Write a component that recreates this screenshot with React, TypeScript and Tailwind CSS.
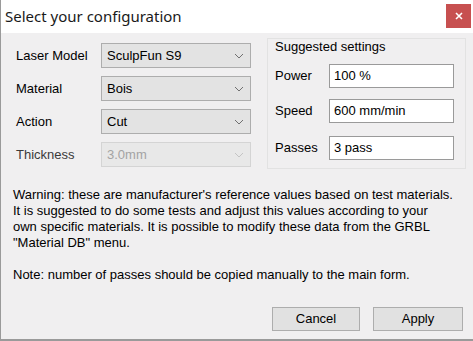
import React from "react";

const Chevron = ({ color = "#606060" }: { color?: string }) => (
  <svg width="10" height="6" viewBox="0 0 10 6" fill="none">
    <path d="M1 1l4 4 4-4" stroke={color} strokeWidth="1" />
  </svg>
);

const Combo = ({ value, disabled = false }: { value: string; disabled?: boolean }) => (
  <div
    className={`flex h-[25px] w-[150px] items-center justify-between border pl-[5px] pr-[6px] ${
      disabled ? "border-[#d4d4d4] bg-[#e8e8e8] text-[#a3a3a3]" : "border-[#adadad] bg-[#e3e3e3] text-black"
    }`}
  >
    <span>{value}</span>
    <Chevron color={disabled ? "#c4c4c4" : "#707070"} />
  </div>
);

const Field = ({ value }: { value: string }) => (
  <div className="flex h-[24px] w-[125px] items-center border border-[#9a9a9a] bg-white pl-[4px]">{value}</div>
);

export default function App() {
  return (
    <div
      className="relative flex h-[341px] w-[473px] flex-col overflow-hidden border-l border-[#9a9a9a] bg-[#f0eff0] text-[13px] text-black"
      style={{ fontFamily: '"Liberation Sans", Arial, sans-serif' }}
    >
      {/* Title bar */}
      <div className="flex h-[33px] shrink-0 items-center justify-between bg-white pl-[4px] pr-[2px]">
        <span className="text-[15px] text-[#1a1a1a]" style={{ fontFamily: '"Noto Sans", sans-serif' }}>
          Select your configuration
        </span>
        <div className="mb-[1px] flex h-[24px] w-[25px] items-center justify-center bg-[#c75050] text-white">
          <svg width="8" height="8" viewBox="0 0 8 8">
            <path d="M1 1l6 6M7 1l-6 6" stroke="white" strokeWidth="1.6" />
          </svg>
        </div>
      </div>

      {/* Body */}
      <div className="flex flex-1 flex-col">
        <div className="flex pl-[15px] pt-[10px]">
          {/* Left */}
          <div className="flex flex-col gap-[8px]">
            {[
              ["Laser Model", "SculpFun S9", false],
              ["Material", "Bois", false],
              ["Action", "Cut", false],
              ["Thickness", "3.0mm", true],
            ].map(([l, v, d]) => (
              <div key={l as string} className="flex items-center">
                <span className={`w-[85px] ${d ? "text-[#3a3a3a]" : ""}`}>{l as string}</span>
                <Combo value={v as string} disabled={d as boolean} />
              </div>
            ))}
          </div>

          {/* Right group */}
          <div className="ml-[16px] mt-[-5px] h-[131px] w-[199px] border border-[#e2e2e2] pl-[7px]">
            <div className="mt-0 leading-[15px]">Suggested settings</div>
            <div className="mt-[10px] flex items-center">
              <span className="w-[54px]">Power</span>
              <Field value="100 %" />
            </div>
            <div className="mt-[11px] flex items-center">
              <span className="w-[54px]">Speed</span>
              <Field value="600 mm/min" />
            </div>
            <div className="mt-[13px] flex items-center">
              <span className="w-[54px]">Passes</span>
              <Field value="3 pass" />
            </div>
          </div>
        </div>

        <div className="mt-[18px] pl-[12px] pr-[8px] leading-[16px]">
          <p>
            Warning: these are manufacturer's reference values based on test materials.
            <br />
            It is suggested to do some tests and adjust this values according to your
            <br />
            own specific materials. It is possible to modify these data from the GRBL
            <br />
            "Material DB" menu.
          </p>
          <p className="mt-[16px]">Note: number of passes should be copied manually to the main form.</p>
        </div>

        <div className="mt-auto flex justify-end gap-[13px] pb-[8px] pr-[10px]">
          <div className="flex h-[24px] w-[88px] items-center justify-center border border-[#adadad] bg-[#e1e1e1]">
            Cancel
          </div>
          <div className="flex h-[24px] w-[90px] items-center justify-center border border-[#adadad] bg-[#e1e1e1]">
            Apply
          </div>
        </div>
      </div>
      <div className="h-[2px] shrink-0 bg-[#9a9a9a]" />
    </div>
  );
}
